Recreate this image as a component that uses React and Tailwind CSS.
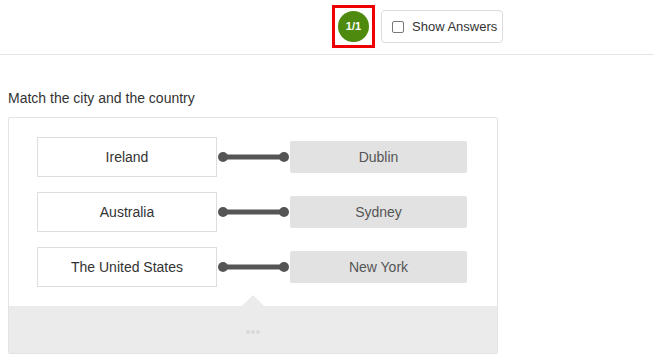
import React from "react";

const pairs = [
  { country: "Ireland", city: "Dublin" },
  { country: "Australia", city: "Sydney" },
  { country: "The United States", city: "New York" },
];

function Connector() {
  return (
    <svg width="73" height="40" viewBox="0 0 73 40" className="shrink-0">
      <line x1="6" y1="20" x2="67" y2="20" stroke="#555" strokeWidth="5" />
      <circle cx="6" cy="20" r="5" fill="#555" />
      <circle cx="67" cy="20" r="5" fill="#555" />
    </svg>
  );
}

export default function App() {
  return (
    <div
      className="w-[662px] h-[364px] bg-white text-[#333] overflow-hidden"
      style={{ fontFamily: '"Liberation Sans", Arial, sans-serif' }}
    >
      <div className="w-[654px] h-[55px] border-b border-[#e5e5e5] flex items-start pl-[332px] pt-[5px]">
        <div className="w-[43px] h-[43px] border-[3px] border-[#ee0000] flex items-center justify-center">
          <div className="w-[31px] h-[31px] rounded-full bg-[#4e8a0e] text-white text-[11px] font-bold flex items-center justify-center">
            1/1
          </div>
        </div>
        <button className="ml-[6px] mt-[5px] w-[122px] h-[33px] border border-[#dcdcdc] rounded-[4px] bg-white flex items-center pl-[10px] text-[13px] text-[#333]">
          <span className="w-[12px] h-[12px] border border-[#777] rounded-[2px] bg-white mr-[8px]" />
          Show Answers
        </button>
      </div>

      <div className="pl-[8px] pt-[33px] text-[14px] text-[#333] leading-[20px]">
        Match the city and the country
      </div>

      <div className="ml-[8px] mt-[9px] w-[490px] h-[237px] border border-[#e3e3e3] rounded-[2px] flex flex-col">
        <div className="flex flex-col gap-[15px] pt-[19px] pl-[28px]">
          {pairs.map((p) => (
            <div key={p.city} className="flex items-center h-[40px]">
              <div className="w-[180px] h-[40px] border border-[#dedede] bg-white flex items-center justify-center text-[14px] text-[#333]">
                {p.country}
              </div>
              <Connector />
              <div className="w-[177px] h-[32px] rounded-[2px] bg-[#e2e2e2] flex items-center justify-center text-[14px] text-[#555]">
                {p.city}
              </div>
            </div>
          ))}
        </div>
        <div className="relative mt-auto h-[47px] bg-[#ebebeb] flex items-center justify-center">
          <div className="absolute left-[233px] -top-[11px] w-0 h-0 border-l-[11px] border-r-[11px] border-b-[11px] border-l-transparent border-r-transparent border-b-[#ebebeb]" />
          <div className="flex gap-[1px] mt-[4px]">
            <span className="w-[4px] h-[4px] rounded-full bg-[#dadada]" />
            <span className="w-[4px] h-[4px] rounded-full bg-[#dadada]" />
            <span className="w-[4px] h-[4px] rounded-full bg-[#dadada]" />
          </div>
        </div>
      </div>
    </div>
  );
}
